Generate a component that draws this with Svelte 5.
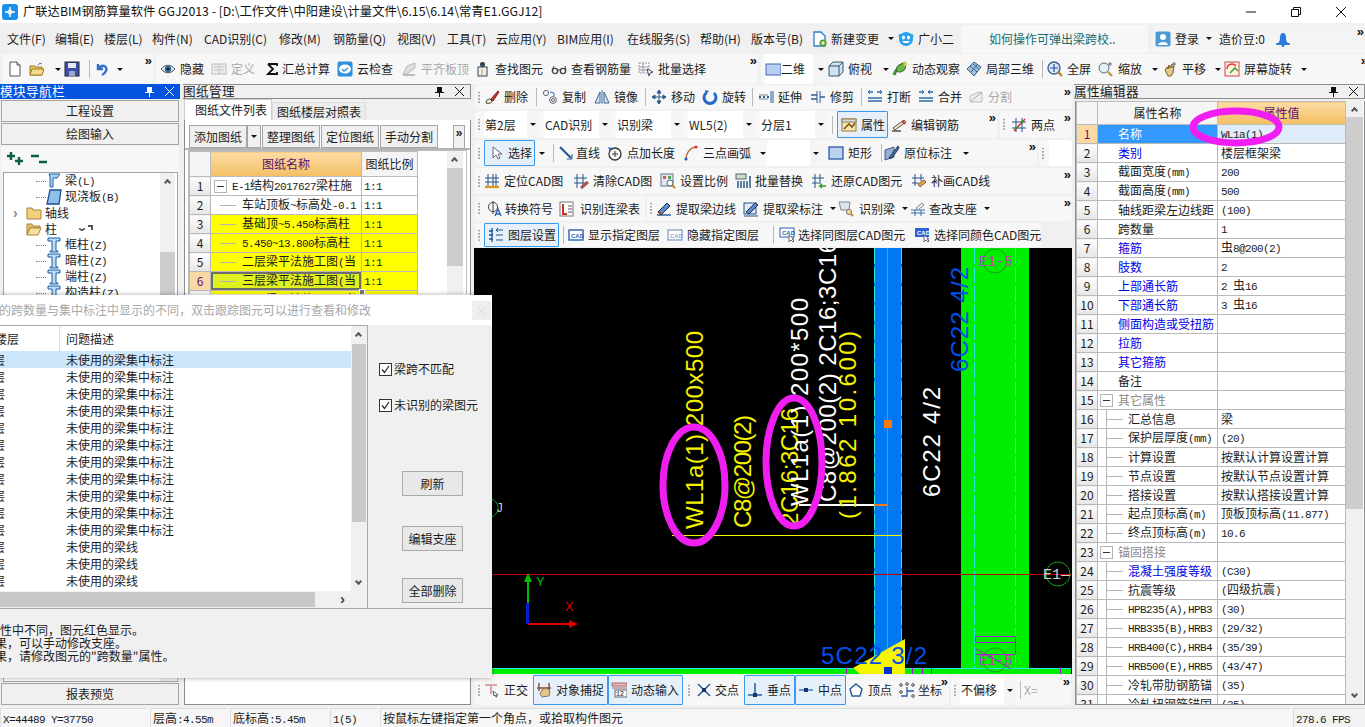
<script>
  // little 16x16 toolbar glyphs, drawn by hand
  const icons = {
    new: '<path d="M3 1h7l3 3v11H3z" fill="#fff" stroke="#555"/><path d="M10 1v3h3" fill="#ddd" stroke="#555"/>',
    open: '<path d="M1 5h5l1 1h6v8H1z" fill="#e9c46a" stroke="#a07a20"/><path d="M3 8h12l-2 6H1z" fill="#f6dc8a" stroke="#a07a20"/><path d="M9 4c1-2 3-2 4-1" stroke="#3a7bd5" fill="none"/>',
    save: '<rect x="1" y="1" width="14" height="14" fill="#3f51a5" stroke="#223"/><rect x="4" y="2" width="8" height="5" fill="#dfe6f5"/><rect x="5" y="10" width="6" height="5" fill="#9aa7c9"/>',
    undo: '<path d="M4 3v5h5M5 7c3-4 9-2 7 3-1 2-2 3-4 4" fill="none" stroke="#2f6fc9" stroke-width="2.4"/>',
    eye: '<path d="M1 8c4-5 10-5 14 0-4 5-10 5-14 0z" fill="#dfe8ee" stroke="#456"/><circle cx="8" cy="8" r="3.2" fill="#2c6a94"/><circle cx="8" cy="8" r="1.3" fill="#111"/>',
    def: '<rect x="1" y="3" width="14" height="10" fill="#eee" stroke="#bbb"/><path d="M3 6h4M3 9h4M9 6h4M9 9h4M8 3v10" stroke="#bbb"/>',
    sigma: '<path d="M3 3h9v2M3 3l5 5-5 5h9v-2" fill="none" stroke="#111" stroke-width="1.8"/>',
    cloud: '<rect x="0.5" y="0.5" width="15" height="15" rx="2" fill="#2e8fdc"/><ellipse cx="8" cy="8" rx="6" ry="4.5" fill="#fff"/><path d="M5 8l2 2 4-3" stroke="#2e8fdc" fill="none" stroke-width="1.4"/>',
    align: '<path d="M2 13l4-8 8-3v5l-8 6z" fill="#ddd" stroke="#bbb"/><path d="M2 14h12" stroke="#bbb" stroke-width="2"/>',
    find: '<rect x="5" y="1" width="5" height="5" rx="2" fill="#345"/><rect x="3" y="6" width="9" height="9" fill="#eee" stroke="#345"/><path d="M7 8v6" stroke="#c9a13b"/>',
    glasses: '<circle cx="4" cy="10" r="2.6" fill="none" stroke="#444" stroke-width="1.4"/><circle cx="12" cy="10" r="2.6" fill="none" stroke="#444" stroke-width="1.4"/><path d="M6 9h4M1 9l2-4M15 9l-1-4" stroke="#444"/>',
    batch: '<path d="M1 2h10v10H1z" fill="none" stroke="#99a" stroke-dasharray="2 1"/><path d="M1 6h10M1 9h10M5 2v10" stroke="#99a"/><path d="M9 8l6 3-3 1-1 3z" fill="#fff" stroke="#456"/>',
    rect2d: '<rect x="1" y="3" width="15" height="11" fill="#b9cff2" stroke="#4069b8"/>',
    cube: '<path d="M1 5l4-4h10v10l-4 4H1z" fill="#cfe3f0" stroke="#33576e"/><path d="M1 5h10v10M11 5l4-4" fill="none" stroke="#33576e"/>',
    orbit: '<path d="M2 14c2-6 7-11 12-12" stroke="#3a8f3a" stroke-width="3" fill="none"/><ellipse cx="9" cy="7" rx="5" ry="3.5" fill="#6fb34a" stroke="#2d6a2d" transform="rotate(-35 9 7)"/><circle cx="13" cy="3" r="2" fill="#e6c63a"/>',
    local3d: '<path d="M1 8l7-7 7 5-7 9z" fill="#9fc0df" stroke="#3c6287"/><path d="M4 5l7 6M7 3l6 5M5 11l6-7" stroke="#3c6287"/>',
    full: '<circle cx="7" cy="7" r="6" fill="#dde8f5" stroke="#3d5f97" stroke-width="1.4"/><path d="M7 3v8M3 7h8" stroke="#2152a8" stroke-width="1.2"/><path d="M11 11l4 4" stroke="#b9862c" stroke-width="2.4"/>',
    zoom: '<circle cx="6" cy="7" r="5" fill="#e4eef8" stroke="#667"/><path d="M10 11l4 4" stroke="#c39a3d" stroke-width="2.4"/><path d="M12 1v4M10 3h4" stroke="#667"/>',
    hand: '<path d="M3 9l2-3 1 2 1-4 1 3 2-4v4l2-2-1 7-2 3H6z" fill="#e3c98c" stroke="#7a5a20"/><path d="M12 1v4M10 3h4" stroke="#666"/>',
    screen: '<rect x="1" y="1" width="14" height="14" fill="#fdf6d8" stroke="#c46"/><path d="M3 8a5 5 0 0 1 9-3" fill="none" stroke="#e33" stroke-width="1.4"/><path d="M6 12l5-5 3 3" stroke="#4a9e4a" fill="none" stroke-width="1.6"/>',
    del: '<path d="M2 14c0-3 2-4 4-4l2 2c0 2-3 3-6 2z" fill="#f3e9c9" stroke="#444"/><path d="M7 10l7-8 1 1-6 9z" fill="#c33" stroke="#722"/>',
    copy: '<circle cx="4" cy="4" r="2.6" fill="none" stroke="#667"/><circle cx="11" cy="11" r="3.4" fill="none" stroke="#667"/><circle cx="11" cy="11" r="1.5" fill="none" stroke="#667"/><path d="M8 3l4 1 0 3" fill="none" stroke="#2f6fc9"/>',
    mirror: '<path d="M1 14L6 3v11zM15 14L10 3v11z" fill="#d5e4f3" stroke="#3f6791"/><path d="M8 1v14" stroke="#3f6791"/>',
    move: '<path d="M8 1v14M1 8h14M8 1L6 4h4zM8 15l-2-3h4zM1 8l3-2v4zM15 8l-3-2v4z" stroke="#2c5a8e" fill="#2c5a8e"/>',
    rot: '<path d="M12 4a6 6 0 1 1-8 0" fill="none" stroke="#2768c4" stroke-width="3"/><path d="M3 1l4 1-3 4z" fill="#2768c4"/>',
    extend: '<path d="M1 8h2M5 8h2M9 8h2" stroke="#2d5d97" stroke-width="2"/><path d="M1 6h9M1 10h9" stroke="#789" /><path d="M13 2v12M15 2v12" stroke="#2d5d97"/>',
    trim: '<path d="M1 6h6M1 10h6M10 8h5" stroke="#2d5d97" stroke-width="1.4"/><path d="M7 2v12M10 2v12" stroke="#2d5d97"/>',
    brk: '<path d="M1 3h5M10 3h5M1 12h14M1 9h14" stroke="#2d6ea8" stroke-width="1.3"/><path d="M3 1l-2 2 2 2M13 1l2 2-2 2" stroke="#2d6ea8" fill="none"/>',
    mrg: '<path d="M1 3h5M10 3h5M1 12h14M1 9h14" stroke="#2d6ea8" stroke-width="1.3"/><path d="M4 1l2 2-2 2M12 1l-2 2 2 2" stroke="#2d6ea8" fill="none"/>',
    split: '<path d="M2 13V7l9-4 3 1v9z" fill="#eee" stroke="#bbb"/><path d="M3 12L14 3" stroke="#aaa"/>',
    prop: '<rect x="1" y="2" width="14" height="12" fill="#f7e4b0" stroke="#9a7b33"/><path d="M3 12l5-5 3 3 3-4" stroke="#7a5a20" fill="none" stroke-width="1.6"/><rect x="1" y="2" width="14" height="3" fill="#cfdff2" stroke="#9a7b33"/>',
    edit: '<path d="M1 14h9" stroke="#444" stroke-width="1.4"/><path d="M2 11l11-8 2 2-11 8z" fill="#f0e3b7" stroke="#555"/><path d="M11 4l3 3" stroke="#c33" stroke-width="2"/>',
    twopt: '<path d="M5 1v14M11 1v14M1 5h14M1 11h14" stroke="#25508c"/><path d="M3 14L14 2" stroke="#d22" stroke-width="1.4"/><circle cx="5" cy="11" r="1.4" fill="#2a9e2a"/><circle cx="11" cy="5" r="1.4" fill="#2a9e2a"/>',
    cursor: '<path d="M5 2v11l3-3 2 4 2-1-2-4h4z" fill="#fff" stroke="#667"/>',
    line: '<path d="M2 2l11 11" stroke="#22558e" stroke-width="2"/><path d="M14 9v5H9" fill="none" stroke="#22558e"/>',
    ptlen: '<circle cx="8" cy="9" r="6" fill="none" stroke="#333" stroke-width="1.3"/><path d="M8 6v6M5 9h6" stroke="#333"/><path d="M1 2l4 1-2 3z" fill="#2768c4"/>',
    arc: '<path d="M3 14C3 8 7 3 12 2" fill="none" stroke="#b26b2f" stroke-width="1.4"/><circle cx="3" cy="14" r="1.6" fill="#2a62b9"/><circle cx="13" cy="2" r="1.6" fill="#d33"/>',
    rectdraw: '<rect x="1" y="2" width="14" height="12" fill="#bcd2f3" stroke="#3563ae" stroke-width="1.4"/>',
    orig: '<path d="M1 15V5l9-3v10z" fill="#93aed3" stroke="#405f8c"/><path d="M5 13L14 1l1 2-7 10z" fill="#3e6fb6" stroke="#234"/>',
    locate: '<path d="M4 1v12M9 1v12M12 1v12M1 5h14M1 9h14" stroke="#24528a"/><path d="M1 14h14" stroke="#d89a20" stroke-width="2.4"/>',
    clear: '<path d="M4 1v14M10 1v14M1 5h13M1 10h13" stroke="#24528a"/><path d="M8 15l7-6" stroke="#a55" stroke-width="3"/>',
    scale: '<rect x="1" y="1" width="12" height="12" fill="#dfe9f6" stroke="#678"/><rect x="3" y="3" width="3" height="3" fill="#d55"/><rect x="8" y="3" width="3" height="3" fill="#5a5"/><circle cx="10" cy="10" r="3" fill="#fff" stroke="#567"/><path d="M12 12l3 3" stroke="#b9862c" stroke-width="2"/>',
    replace: '<rect x="1" y="1" width="10" height="5" fill="#cfe0c7" stroke="#567"/><path d="M3 8v7M6 8v7M9 8v7M12 8v7M15 3v12" stroke="#35628f" stroke-width="1.6"/>',
    restore: '<path d="M4 1v14M9 1v10M1 5h12M1 10h7" stroke="#24528a"/><path d="M15 13H9l2-2m-2 2l2 2" stroke="#2a9e2a" stroke-width="1.6" fill="none"/>',
    drawcad: '<path d="M4 1v12M10 1v7M1 5h12M1 10h6" stroke="#24528a"/><path d="M7 11l6-4 2 2-6 5z" fill="#e0a93b" stroke="#855"/>',
    sym: '<circle cx="6" cy="6" r="4.6" fill="none" stroke="#444"/><path d="M6 0v13" stroke="#444"/><path d="M8 15l3-7 3 7M9 13h4" stroke="#2e5fb3" fill="none" stroke-width="1.4"/>',
    ltable: '<rect x="2" y="1" width="13" height="14" fill="#fff" stroke="#777"/><path d="M5 3v10h4" stroke="#c32" stroke-width="2" fill="none"/><path d="M10 5h4M10 8h4M10 11h4" stroke="#556"/>',
    edgeline: '<path d="M1 14h14" stroke="#23528f" stroke-width="1.4"/><path d="M2 11l9-9 3 3-9 9z" fill="#5b8ed0" stroke="#234"/><path d="M3 13l2-2" stroke="#d33" stroke-width="2"/>',
    beamtag: '<rect x="1" y="2" width="12" height="11" fill="#dfe9f6" stroke="#24528a"/><path d="M3 11l9-9 3 2-9 9z" fill="#5b8ed0" stroke="#234"/><path d="M1 15h14" stroke="#24528a"/>',
    recog: '<path d="M1 1h11l-1 8H3z" fill="#dfe3ea" stroke="#789"/><circle cx="11" cy="11" r="2.6" fill="#f3dd9a" stroke="#876"/><path d="M13 13l2 2" stroke="#b9862c" stroke-width="2"/>',
    support: '<path d="M1 9h14M1 12h14M5 9v6M11 9v6" stroke="#3a6fb0"/><path d="M6 7l6-5 2 2-6 5z" fill="#eee" stroke="#888"/>',
    layer: '<path d="M4 1v14M1 4h4M1 8h4M1 12h4" stroke="#24528a" stroke-width="1.3"/><path d="M15 3H8l2-2m-2 2l2 2M15 8H8M15 13H8" stroke="#24528a" fill="none"/>',
    cadshow: '<rect x="1" y="3" width="14" height="10" fill="#fff" stroke="#2b62b3" stroke-width="1.4"/><text x="3" y="11" font-size="6" font-weight="700" fill="#2b62b3" font-family="Liberation Sans">CAD</text>',
    cadhide: '<rect x="1" y="3" width="14" height="10" fill="#fff" stroke="#8ba6cc" stroke-width="1.4"/><text x="3" y="11" font-size="6" font-weight="700" fill="#8ba6cc" font-family="Liberation Sans">CAD</text>',
    cadsel: '<rect x="1" y="1" width="14" height="9" fill="#fff" stroke="#2b62b3"/><text x="3" y="8" font-size="6" font-weight="700" fill="#2b62b3" font-family="Liberation Sans">CAD</text><path d="M10 8v7l2-2 2 2 1-1-2-2h2z" fill="#fff" stroke="#667"/>',
    cadcolor: '<rect x="1" y="1" width="14" height="9" fill="#2b62d8"/><text x="3" y="8" font-size="6" font-weight="700" fill="#fff" font-family="Liberation Sans">CAD</text><path d="M10 8v7l2-2 2 2 1-1-2-2h2z" fill="#fff" stroke="#667"/>',
    ortho: '<path d="M1 2h12v2H8v8H6V4H1z" fill="#d9a5a5"/><path d="M9 9l5 4-2 0 1 2-1 0-1-2-1 1z" fill="#fff" stroke="#567"/>',
    snap: '<path d="M3 1v8M13 1v8M1 6h14" stroke="#8a4b33" stroke-width="1.4"/><path d="M4 12l2-4 4-2 4 3-1 5-7 1z" fill="#e7c880" stroke="#876"/>',
    dyn: '<rect x="1" y="1" width="15" height="3" fill="#e7b9b9" stroke="#a66"/><rect x="4" y="8" width="12" height="7" fill="#fff" stroke="#567"/><path d="M1 6h15" stroke="#a66"/><text x="5" y="14" font-size="6.5" font-family="Liberation Mono" fill="#111">12</text>',
    cross: '<path d="M2 2l12 12M14 2L2 14" stroke="#2a5f9e" stroke-width="1.6"/><rect x="6" y="6" width="4" height="4" fill="#17376b"/>',
    perp: '<path d="M1 13h14M8 1v12" stroke="#2a5f9e" stroke-width="1.5"/><rect x="6" y="11" width="4" height="4" fill="#17376b"/>',
    mid: '<path d="M1 8h14" stroke="#6f9ad0" stroke-width="2"/><rect x="6" y="6" width="4" height="4" fill="#17376b"/>',
    vertex: '<path d="M8 2l6 5-2 7H4L2 7z" fill="#fff" stroke="#2a5f9e" stroke-width="1.5"/>',
    coord: '<path d="M2 14h6V5M8 9h7" stroke="#2a5f9e" stroke-width="1.3" fill="none"/><circle cx="2" cy="3" r="1.3" fill="#fff" stroke="#444"/><circle cx="8" cy="2" r="1.3" fill="#fff" stroke="#444"/><circle cx="14" cy="3" r="1.3" fill="#fff" stroke="#444"/><circle cx="2" cy="10" r="1.3" fill="#fff" stroke="#444"/><circle cx="14" cy="14" r="1.3" fill="#fff" stroke="#444"/>',
    doc: '<path d="M2 1h7l4 4v10H2z" fill="#fff" stroke="#2f7bd5" stroke-width="1.3"/><circle cx="11" cy="12" r="3.6" fill="#5aa02c"/><path d="M11 10v4M9 12h4" stroke="#fff"/>',
    bot: '<circle cx="2.500" cy="5" r="2" fill="#27a0ee"/><circle cx="13.500" cy="5" r="2" fill="#27a0ee"/><ellipse cx="8" cy="8" rx="7" ry="7" fill="#27a0ee"/><ellipse cx="5.500" cy="6.500" rx="1.500" ry="2" fill="#fff"/><ellipse cx="10.500" cy="6.500" rx="1.500" ry="2" fill="#fff"/><path d="M4 10c2 3 6 3 8 0z" fill="#fff"/>',
    login: '<rect x="0.500" y="0.500" width="15" height="15" rx="2" fill="#4a9bd3"/><circle cx="8" cy="6" r="3" fill="#fff"/><path d="M3 14c0-4 10-4 10 0z" fill="#fff"/>',
    bell: '<path d="M3 12c1-1 2-2 2-6 0-2 1-4 3-4s3 2 3 4c0 4 1 5 2 6z" fill="#2e7bdb"/><rect x="1" y="12" width="14" height="2" rx="1" fill="#2e7bdb"/><circle cx="8" cy="15" r="1.300" fill="#2e7bdb"/>',
    app: '<rect x="0" y="0" width="16" height="16" rx="3" fill="#1e8fe6"/><path d="M8 3v10M3 8h10" stroke="#fff" stroke-width="1.400"/><circle cx="8" cy="8" r="2.200" fill="none" stroke="#fff"/>'
  };

  const menu = [
    ['文件(F)', 48], ['编辑(E)', 49], ['楼层(L)', 48], ['构件(N)', 52], ['CAD识别(C)', 75], ['修改(M)', 54],
    ['钢筋量(Q)', 64], ['视图(V)', 50], ['工具(T)', 49], ['云应用(Y)', 61], ['BIM应用(I)', 70], ['在线服务(S)', 73],
    ['帮助(H)', 51], ['版本号(B)', 61]
  ];

  const top = [
    { w: 151, pl: 5, items: [
      { i: 'new', w: 22 }, { i: 'open', w: 23 }, { caret: 1, w: 12 }, { i: 'save', w: 20 }, { sep: 1, w: 10 },
      { i: 'undo', w: 20 }, { caret: 1, w: 12 } ] },
    { w: 602, pl: 4, grip: 0, items: [
      { i: 'eye', t: '隐藏', w: 51 }, { i: 'def', t: '定义', w: 54, gray: 1 }, { i: 'sigma', t: '汇总计算', w: 72, gap: 1 },
      { i: 'cloud', t: '云检查', w: 64 }, { i: 'align', t: '平齐板顶', w: 74, gray: 1 }, { i: 'find', t: '查找图元', w: 76 },
      { i: 'glasses', t: '查看钢筋量', w: 87 }, { i: 'batch', t: '批量选择', w: 80 } ] },
    { w: 608, pl: 4, items: [
      { i: 'rect2d', t: '二维', w: 48, gap: -1 }, { caret: 1, w: 15, boxed: 1 }, { i: 'cube', t: '俯视', w: 51 }, { caret: 1, w: 13 },
      { i: 'orbit', t: '动态观察', w: 74 }, { i: 'local3d', t: '局部三维', w: 72 }, { sep: 1, w: 9 }, { i: 'full', t: '全屏', w: 51 },
      { i: 'zoom', t: '缩放', w: 50 }, { caret: 1, w: 14 }, { i: 'hand', t: '平移', w: 50 }, { caret: 1, w: 12 }, { i: 'screen', t: '屏幕旋转', w: 75 }, { caret: 1, w: 10 } ] }
  ];

  const center = [
    { h: 26, groups: [{ w: 597, grip: 1, items: [
      { i: 'del', t: '删除', w: 47 }, { sep: 1, w: 11 }, { i: 'copy', t: '复制', w: 52 }, { i: 'mirror', t: '镜像', w: 46 }, { sep: 1, w: 11 },
      { i: 'move', t: '移动', w: 51 }, { i: 'rot', t: '旋转', w: 45 }, { sep: 1, w: 11 }, { i: 'extend', t: '延伸', w: 52 }, { i: 'trim', t: '修剪', w: 46 }, { sep: 1, w: 11 },
      { i: 'brk', t: '打断', w: 51 }, { i: 'mrg', t: '合并', w: 50 }, { i: 'split', t: '分割', w: 60, gray: 1 } ] }] },
    { h: 29, groups: [
      { w: 522, grip: 1, items: [
        { combo: '第2层', w: 55 }, { blank: 1, w: 5 }, { combo: 'CAD识别', w: 67 }, { blank: 1, w: 5 }, { combo: '识别梁', w: 67 }, { blank: 1, w: 5 },
        { combo: 'WL5(2)', w: 67 }, { blank: 1, w: 5 }, { combo: '分层1', w: 67 }, { sep: 1, w: 10 },
        { i: 'prop', t: '属性', w: 51, on: 1, pad: 4 }, { blank: 1, w: 3 }, { i: 'edit', t: '编辑钢筋', w: 90 } ] },
      { w: 72, grip: 1, ml: 3, items: [{ blank: 1, w: 2 }, { i: 'twopt', t: '两点', w: 48 }] }] },
    { h: 28, groups: [
      { w: 562, grip: 1, items: [
        { i: 'cursor', t: '选择', w: 51, on: 1, pad: 4 }, { caret: 1, w: 13 }, { sep: 1, w: 10 }, { i: 'line', t: '直线', w: 49, gap: 2 },
        { i: 'ptlen', t: '点加长度', w: 76 }, { i: 'arc', t: '三点画弧', w: 76 }, { caret: 1, w: 8 }, { combo: '', w: 55 }, { blank: 1, w: 6 },
        { i: 'rectdraw', t: '矩形', w: 51 }, { sep: 1, w: 5 }, { i: 'orig', t: '原位标注', w: 77 }, { caret: 1, w: 10 } ] },
      { w: 33, grip: 1, ml: 2, white: 1, items: [] }] },
    { h: 28, groups: [{ w: 597, grip: 1, items: [
      { i: 'locate', t: '定位CAD图', w: 89 }, { i: 'clear', t: '清除CAD图', w: 87 }, { i: 'scale', t: '设置比例', w: 75 }, { i: 'replace', t: '批量替换', w: 76 },
      { i: 'restore', t: '还原CAD图元', w: 100 }, { i: 'drawcad', t: '补画CAD线', w: 90 } ] }] },
    { h: 27, groups: [
      { w: 170, grip: 1, nomore: 1, items: [{ blank: 1, w: 3 }, { i: 'sym', t: '转换符号', w: 71, gap: 2 }, { i: 'ltable', t: '识别连梁表', w: 87, gap: 6 }] },
      { w: 425, grip: 1, ml: 2, items: [
        { i: 'edgeline', t: '提取梁边线', w: 87 }, { i: 'beamtag', t: '提取梁标注', w: 85 }, { caret: 1, w: 10 }, { i: 'recog', t: '识别梁', w: 61, gap: 5 }, { caret: 1, w: 11 },
        { i: 'support', t: '查改支座', w: 72, gap: 3 }, { caret: 1, w: 10 } ] }] },
    { h: 26, groups: [{ w: 566, grip: 1, nomore: 1, items: [
      { i: 'layer', t: '图层设置', w: 75, on: 1, pad: 4 }, { sep: 1, w: 9 }, { i: 'cadshow', t: '显示指定图层', w: 99 }, { i: 'cadhide', t: '隐藏指定图层', w: 100, gap: 4 }, { sep: 1, w: 12 },
      { i: 'cadsel', t: '选择同图层CAD图元', w: 135, gap: 3 }, { i: 'cadcolor', t: '选择同颜色CAD图元', w: 134 } ] }] }
  ];

  const bottom = [
    { w: 474, grip: 1, items: [
      { i: 'ortho', t: '正交', w: 49 }, { i: 'snap', t: '对象捕捉', w: 75, on: 1, pad: 3 }, { i: 'dyn', t: '动态输入', w: 75, on: 1, pad: 3 }, { grip: 1, w: 13 },
      { i: 'cross', t: '交点', w: 48, gap: 3 }, { i: 'perp', t: '垂点', w: 51, on: 1, pad: 3 }, { i: 'mid', t: '中点', w: 51, on: 1, pad: 3 }, { blank: 1, w: 2 },
      { i: 'vertex', t: '顶点', w: 51 }, { i: 'coord', t: '坐标', w: 48, gap: 3 } ] },
    { w: 120, grip: 1, ml: 2, items: [{ combo: '不偏移', w: 56 }, { sep: 1, w: 8 }, { text: 'X=', w: 30 }] }
  ];

  const drawings = [
    ['1', 'E-1结构2017627梁柱施', 'root'], ['2', '车站顶板~标高处-0.1', ''], ['3', '基础顶~5.450标高柱', 'y'],
    ['4', '5.450~13.800标高柱', 'y'], ['5', '二层梁平法施工图(当', 'y'], ['6', '三层梁平法施工图(当', 'y sel'], ['7', '四层梁平法施工图(当', 'y']
  ];

  const tree = [
    { k: 'beam', t: '梁(L)', d: 2 }, { k: 'slab', t: '现浇板(B)', d: 2 }, { k: 'closed', t: '轴线', d: 1 }, { k: 'opened', t: '柱', d: 1 },
    { k: 'col', t: '框柱(Z)', d: 2 }, { k: 'col', t: '暗柱(Z)', d: 2 }, { k: 'col', t: '端柱(Z)', d: 2 }, { k: 'col', t: '构造柱(Z)', d: 2 }
  ];

  const problems = Array.from({ length: 14 }, (_, n) => (n < 11 ? '未使用的梁集中标注' : '未使用的梁线'));

  // b = blue link, g = group header, s = nested under a group
  const props = [
    ['名称', 'WL1a(1)', 'b sel'], ['类别', '楼层框架梁', 'b'], ['截面宽度(mm)', '200', ''], ['截面高度(mm)', '500', ''],
    ['轴线距梁左边线距', '(100)', ''], ['跨数量', '1', ''], ['箍筋', '虫8@200(2)', 'b'], ['肢数', '2', 'b'],
    ['上部通长筋', '2 虫16', 'b'], ['下部通长筋', '3 虫16', 'b'], ['侧面构造或受扭筋', '', 'b'], ['拉筋', '', 'b'],
    ['其它箍筋', '', 'b'], ['备注', '', ''], ['其它属性', '', 'g'], ['汇总信息', '梁', 's'], ['保护层厚度(mm)', '(20)', 's'],
    ['计算设置', '按默认计算设置计算', 's'], ['节点设置', '按默认节点设置计算', 's'], ['搭接设置', '按默认搭接设置计算', 's'],
    ['起点顶标高(m)', '顶板顶标高(11.877)', 's'], ['终点顶标高(m)', '10.6', 's'], ['锚固搭接', '', 'g'], ['混凝土强度等级', '(C30)', 's b'],
    ['抗震等级', '(四级抗震)', 's'], ['HPB235(A),HPB3', '(30)', 's'], ['HRB335(B),HRB3', '(29/32)', 's'], ['HRB400(C),HRB4', '(35/39)', 's'],
    ['HRB500(E),HRB5', '(43/47)', 's'], ['冷轧带肋钢筋锚', '(35)', 's'], ['冷轧扭钢筋锚固', '(35)', 's']
  ];

  // ascii runs get a half-width mono face, like the old bitmap font
  function runs(text) {
    return text.match(/[\x00-\x7f]+|[^\x00-\x7f]+/g) || [];
  }
  const isLat = (r) => r.charCodeAt(0) < 128;
</script>

{#snippet ico(name, size = 16)}
  <svg class="ico" width={size} height={size} viewBox="0 0 16 16">{@html icons[name]}</svg>
{/snippet}

{#snippet sim(text)}
  {#each runs(text) as r}<span class:lat={isLat(r)}>{r}</span>{/each}
{/snippet}

{#snippet more()}
  <span class="more">»</span>
{/snippet}

{#snippet group(g)}
  <div class="group" class:white={g.white} style:width="{g.w}px" style:margin-left="{g.ml || 0}px" style:padding-left="{g.pl || 0}px">
    {#if g.grip}<span class="grip"></span>{/if}
    {#each g.items as it}
      {#if it.sep}
        <span class="sep" style:width="{it.w}px"></span>
      {:else if it.blank}
        <span style:width="{it.w}px"></span>
      {:else if it.grip}
        <span class="gripbox" style:width="{it.w}px"><span class="grip"></span></span>
      {:else if it.combo !== undefined}
        <span class="combo" style:width="{it.w}px"><span class="ctext">{it.combo}</span><span class="cbtn"><i class="tri"></i></span></span>
      {:else if it.text}
        <span class="tool gray" style:width="{it.w}px">{it.text}</span>
      {:else if it.caret}
        <span class="caret" class:boxed={it.boxed} style:width="{it.w}px"><i class="tri"></i></span>
      {:else}
        <span class="tool" class:on={it.on} class:gray={it.gray} class:twod={it.i === 'rect2d'} style:width="{it.w}px" style:padding-left="{it.pad ?? 0}px" style:gap="{it.gap ?? 4}px">
          {@render ico(it.i)}
          {#if it.t}<span>{it.t}</span>{/if}
        </span>
      {/if}
    {/each}
    {#if !g.nomore && !g.white}{@render more()}{/if}
  </div>
{/snippet}

<div class="app">
  <header class="title">
    {@render ico('app', 16)}
    <span class="title-text">广联达BIM钢筋算量软件 GGJ2013 - [D:\工作文件\中阳建设\计量文件\6.15\6.14\常青E1.GGJ12]</span>
    <div class="winbtns">
      <svg width="10" height="10" viewBox="0 0 10 10"><path d="M0 5h10" stroke="#111" /></svg>
      <svg width="10" height="10" viewBox="0 0 10 10"><path d="M2.500 2.500V.500h7v7h-2M.500 2.500h7v7h-7z" stroke="#111" fill="none" /></svg>
      <svg width="10" height="10" viewBox="0 0 10 10"><path d="M0 0l10 10M10 0L0 10" stroke="#111" /></svg>
    </div>
  </header>

  <nav class="menubar">
    {#each menu as [label, w]}
      <span class="menu-item" style:width="{w}px">{label}</span>
    {/each}
    <span class="menu-icon">{@render ico('doc')}<span>新建变更</span><i class="tri"></i></span>
    <span class="menu-icon bot">{@render ico('bot')}<span>广小二</span></span>
    <span class="hint">如何操作可弹出梁跨校..</span>
    <div class="account">
      {@render ico('login')}
      <span>登录</span><i class="tri"></i>
      <span class="beans">造价豆:0</span>
      {@render ico('bell')}
      {@render more()}
    </div>
  </nav>

  <div class="topbar">
    {#each top as g, n}
      {@render group({ ...g, ml: n ? 3 : 2 })}
    {/each}
  </div>

  <main class="body">
    <section class="nav">
      <div class="phead active"><span>模块导航栏</span>
        <span class="pin"><svg width="9" height="11" viewBox="0 0 9 11"><path d="M2 1h5v5h2v1H5v4H4V7H0V6h2z" fill="#fff" /></svg><svg width="9" height="9" viewBox="0 0 9 9"><path d="M0 0l9 9M9 0L0 9" stroke="#fff" /></svg></span>
      </div>
      <button class="navbtn">工程设置</button>
      <button class="navbtn">绘图输入</button>
      <div class="treebar">
        <svg width="18" height="16" viewBox="0 0 18 16"><path d="M1 5h8M5 1v8M9 10h8M13 6v8" stroke="#0b5f48" stroke-width="2.400" /></svg>
        <svg width="18" height="16" viewBox="0 0 18 16"><path d="M1 5h8M9 11h8" stroke="#0b5f48" stroke-width="2.400" /></svg>
      </div>
      <div class="tree">
        {#each tree as node}
          <div class="tnode" class:deep={node.d === 2}>
            {#if node.k === 'closed'}<span class="chev">›</span>{/if}
            {#if node.k === 'opened'}<span class="chev down">›</span>{/if}
            {#if node.d === 2}<span class="dots"></span>{/if}
            <svg width="16" height="16" viewBox="0 0 16 16">
              {#if node.k === 'closed'}<path d="M1 3h5l1 2h8v9H1z" fill="#f3d07a" stroke="#a8873c" />
              {:else if node.k === 'opened'}<path d="M1 3h5l1 2h7v2H4l-3 7z" fill="#e6bc62" stroke="#a8873c" /><path d="M4 7h11l-3 7H1z" fill="#f7e09e" stroke="#a8873c" />
              {:else if node.k === 'beam'}<path d="M3 1h11l-3 4H7v9H4V4z" fill="#a8d3f0" stroke="#1e62b0" />
              {:else if node.k === 'slab'}<path d="M4 1h11l-2 14H1z" fill="#8fc0ea" stroke="#174f9c" stroke-width="1.300" />
              {:else}<path d="M2 1h12v3H10v10h2v1H4v-1h2V4H2z" fill="#bcdcf6" stroke="#1e5cab" />{/if}
            </svg>
            <span>{@render sim(node.t)}</span>
          </div>
        {/each}
        <div class="tree-scroll"><span class="up"></span><span class="thumb"></span></div>
      </div>
      <button class="navbtn report">报表预览</button>
    </section>

    <section class="drawings">
      <div class="phead"><span>图纸管理</span>
        <span class="pin"><svg width="9" height="11" viewBox="0 0 9 11"><path d="M2 1h5v5h2v1H5v4H4V7H0V6h2z" fill="#111" /></svg><svg width="9" height="9" viewBox="0 0 9 9"><path d="M0 0l9 9M9 0L0 9" stroke="#111" /></svg></span>
      </div>
      <div class="tabs"><span class="tab cur">图纸文件列表</span><span class="tab">图纸楼层对照表</span></div>
      <div class="tabbody">
        <div class="dwgbar">
          <span class="dbtn wide">添加图纸</span><span class="dbtn drop"><i class="tri"></i></span><span class="dbtn">整理图纸</span><span class="dbtn">定位图纸</span><span class="dbtn">手动分割</span>
          <span class="dmore">»</span>
        </div>
        <div class="dwgtable">
          <table>
            <colgroup><col class="c-n" /><col class="c-name" /><col class="c-r" /></colgroup>
            <thead><tr><th class="idx"></th><th class="hot">图纸名称</th><th>图纸比例</th></tr></thead>
            <tbody>
              {#each drawings as [n, name, kind]}
                <tr class:yellow={kind.includes('y')} class:sel={kind.includes('sel')}>
                  <td class="idx">{n}</td>
                  <td class="nm" class:rootrow={kind === 'root'}>
                    {#if kind === 'root'}<span class="minus"></span>{:else}<span class="branch"></span>{/if}
                    {@render sim(name)}
                  </td>
                  <td class="ratio"><span class="lat">1:1</span></td>
                </tr>
              {/each}
            </tbody>
          </table>
          <span class="handle"></span>
          <div class="vscroll"><span class="up"></span><span class="thumb"></span></div>
        </div>
        <div class="dwgfoot"></div>
      </div>
    </section>

    <section class="center">
      {#each center as row}
        <div class="cbar" style:height="{row.h}px">
          {#each row.groups as g}{@render group(g)}{/each}
        </div>
      {/each}

      <div class="canvas">
        <svg width="598" height="426" viewBox="474 249 598 426" font-family="Liberation Sans, sans-serif">
          <rect x="474" y="249" width="598" height="426" fill="#000" />
          <rect x="961" y="249" width="68" height="420" fill="#00ee00" />
          <rect x="874" y="249" width="28" height="426" fill="#0078f2" />
          <path d="M874.500 249v426M901.500 249v426M974.500 249v420M1015.500 249v420" stroke="#22e6e6" stroke-dasharray="16 3" />
          <path d="M887.500 249v426" stroke="#8a8a8a" />
          <path d="M995.500 249v420" stroke="#22d022" />
          <rect x="474" y="669" width="597" height="6" fill="#00ee00" />
          <path d="M474 669.500H853M905 669.500H1071" stroke="#22e6e6" />
          <path d="M846.500 669v6M864.500 669v6M912.500 669v6M922.500 669v6M931.500 669v6M1060.500 669v6" stroke="#9a20d0" />
          <path d="M474 575.500H1071" stroke="#c00000" />
          <path d="M672 536.500H901" stroke="#f5f500" />
          <path d="M799 506H874" stroke="#fff" stroke-width="2" />
          <path d="M874 506H887" stroke="#ff7a10" stroke-width="2" />
          <rect x="884" y="421" width="8" height="8" fill="#ff7a10" />
          <polygon points="853,669 905,640 905,675 860,675" fill="#f5f500" />
          <rect x="884" y="668" width="8" height="7" fill="#0030d0" />

          <g fill="#f2f200">
            <text transform="translate(703 530) rotate(-90)" font-size="24" textLength="198" lengthAdjust="spacing">WL1a(1) 200x500</text>
            <text transform="translate(751 529) rotate(-90)" font-size="24" textLength="113" lengthAdjust="spacing">C8@200(2)</text>
            <text transform="translate(798 527) rotate(-90)" font-size="24" textLength="118" lengthAdjust="spacing">2C16;3C16</text>
            <text transform="translate(856 520) rotate(-90)" font-size="24" textLength="188" lengthAdjust="spacing">(1.862  10.600)</text>
          </g>
          <g fill="#fff">
            <text transform="translate(808 507) rotate(-90)" font-size="24" textLength="208" lengthAdjust="spacing">WL1a(1) 200*500</text>
            <text transform="translate(836 503) rotate(-90)" font-size="24" textLength="262" lengthAdjust="spacing">C8@200(2) 2C16;3C16</text>
            <text transform="translate(940 498) rotate(-90)" font-size="24" textLength="110" lengthAdjust="spacing">6C22  4/2</text>
          </g>
          <text transform="translate(968 373) rotate(-90)" font-size="24" fill="#0050e8" textLength="105" lengthAdjust="spacing">6C22  4/2</text>
          <text x="821" y="665" font-size="24" fill="#0050e8" textLength="106" lengthAdjust="spacing">5C22  3/2</text>

          <g fill="none" stroke="#18a018">
            <circle cx="995" cy="262" r="12" />
            <circle cx="995" cy="661" r="12" />
            <circle cx="1058" cy="575" r="12" />
            <path d="M492 500c8 4 8 14 0 18" />
          </g>
          <g font-size="14" fill="#c040c0" font-family="Liberation Mono, monospace">
            <text x="979" y="267">E1-5</text>
            <text x="979" y="666">E1-5</text>
          </g>
          <text x="1043" y="580" font-size="15" fill="#d0d0d0" font-family="Liberation Mono, monospace">E1—</text>
          <text x="496" y="513" font-size="12" fill="#d0d0d0" font-family="Liberation Mono, monospace">J</text>
          <path d="M975.500 637.500h40M975.500 643.500h40M975.500 637.500v6M975.500 655.500h40M1015.500 637.500v18M975.500 649.500l35 20" stroke="#a020d0" fill="none" />

          <path d="M528 625V578" stroke="#00c000" stroke-width="2" />
          <path d="M528 574l-4 9h8z" fill="#00c000" />
          <path d="M528 625H574" stroke="#e00000" stroke-width="2" />
          <path d="M578 625l-9-4v8z" fill="#e00000" />
          <rect x="526" y="604" width="3" height="21" fill="#0020d0" />
          <text x="536" y="587" font-size="13" fill="#00c000">Y</text>
          <text x="565" y="612" font-size="13" fill="#e00000">X</text>

          <g fill="none" stroke="#f01ef0" stroke-width="7">
            <ellipse cx="694" cy="486" rx="31" ry="58" />
            <ellipse cx="794" cy="463" rx="28" ry="64" />
          </g>
        </svg>
      </div>

      <div class="cbar foot">
        {#each bottom as g}{@render group(g)}{/each}
      </div>
    </section>

    <section class="props">
      <div class="phead"><span>属性编辑器</span>
        <span class="pin"><svg width="9" height="11" viewBox="0 0 9 11"><path d="M2 1h5v5h2v1H5v4H4V7H0V6h2z" fill="#111" /></svg><svg width="9" height="9" viewBox="0 0 9 9"><path d="M0 0l9 9M9 0L0 9" stroke="#111" /></svg></span>
      </div>
      <div class="ptable">
        <table>
          <colgroup><col class="p-n" /><col class="p-name" /><col class="p-val" /></colgroup>
          <thead><tr><th class="idx"></th><th>属性名称</th><th class="hot">属性值</th></tr></thead>
          <tbody>
            {#each props as [name, val, kind], n}
              {@const k = kind.split(' ')}
              <tr class:sel={k.includes('sel')}>
                <td class="idx">{n + 1}</td>
                <td class="pn" class:link={k.includes('b')} class:grp={k.includes('g')} class:sub={k.includes('s')}>
                  {#if k.includes('g')}<span class="minus"></span>{/if}
                  {#if k.includes('s')}<span class="branch"></span>{/if}
                  {@render sim(name)}
                </td>
                <td class="pv">{@render sim(val)}</td>
              </tr>
            {/each}
          </tbody>
        </table>
        <div class="vscroll tall"><span class="up"></span><span class="thumb"></span><span class="down"></span></div>
        <svg class="circle" width="100" height="48" viewBox="0 0 100 48"><ellipse cx="50" cy="24" rx="43" ry="16" fill="none" stroke="#f01ef0" stroke-width="7" /></svg>
      </div>
    </section>

    <aside class="dialog">
      <div class="dtitle">
        <span>的跨数量与集中标注中显示的不同，双击跟踪图元可以进行查看和修改</span>
        <span class="dclose">×</span>
      </div>
      <div class="dmain">
        <div class="dlist">
          <div class="lhead"><span class="lc1">楼层</span><span class="lc2">问题描述</span></div>
          {#each problems as p, n}
            <div class="lrow" class:cur={n === 0}><span class="lc1">层</span><span class="lc2">{p}</span></div>
          {/each}
          <div class="lvs"><span class="up"></span><span class="thumb"></span><span class="down"></span></div>
          <div class="lhs"><span class="thumb"></span><span class="next">›</span></div>
        </div>
        <div class="dside">
          <label class="chk"><span class="box"><svg width="11" height="11" viewBox="0 0 11 11"><path d="M2 5.500l2.500 3L9 2" fill="none" stroke="#222" stroke-width="1.200" /></svg></span>梁跨不匹配</label>
          <label class="chk second"><span class="box"><svg width="11" height="11" viewBox="0 0 11 11"><path d="M2 5.500l2.500 3L9 2" fill="none" stroke="#222" stroke-width="1.200" /></svg></span>未识别的梁图元</label>
          <button class="sbtn first">刷新</button>
          <button class="sbtn">编辑支座</button>
          <button class="sbtn last">全部删除</button>
        </div>
      </div>
      <div class="dnotes">
        <p>属性中不同，图元红色显示。</p>
        <p>果，可以手动修改支座。</p>
        <p>果，请修改图元的"跨数量"属性。</p>
      </div>
    </aside>
  </main>

  <footer class="status">
    <span class="st s1">{@render sim('X=44489 Y=37750')}</span>
    <span class="st s2">{@render sim('层高:4.55m')}</span>
    <span class="st s3">{@render sim('底标高:5.45m')}</span>
    <span class="st s4">{@render sim('1(5)')}</span>
    <span class="st s5">按鼠标左键指定第一个角点，或拾取构件图元</span>
    <span class="st s6">{@render sim('278.6 FPS')}</span>
  </footer>
</div>

<style>
  :global(body) { margin: 0; }
  .app {
    position: relative;
    width: 1365px;
    height: 727px;
    overflow: hidden;
    display: flex;
    flex-direction: column;
    background: #f0f0f0;
    color: #1c1c1c;
    font: 12px/1 "Noto Sans CJK SC", "Liberation Sans", sans-serif;
  }
  .ico { flex: none; display: block; }
  .lat { font-family: "Liberation Mono", monospace; font-size: 11px; letter-spacing: -0.600px; }

  .title {
    height: 23px;
    background: #fff;
    display: flex;
    align-items: center;
    padding-left: 2px;
    gap: 5px;
    color: #111;
    font-size: 12.300px;
    flex: none;
  }
  .title-text { white-space: pre; }
  .winbtns { margin-left: auto; display: flex; gap: 35px; padding-right: 19px; }

  .menubar { height: 31px; display: flex; align-items: center; padding-left: 7px; white-space: nowrap; flex: none; }
  .menu-item { display: block; }
  .menu-icon { display: flex; align-items: center; gap: 3px; width: 86px; }
  .menu-icon .tri { margin-left: 6px; }
  .menu-icon.bot { width: 63px; gap: 4px; }
  .hint { width: 159px; height: 28px; padding-left: 28px; background: #f7f7f7; line-height: 28px; color: #1a6a6a; }
  .account { flex: 1; display: flex; align-items: center; margin-left: 5px; padding-left: 2px; gap: 4px; height: 28px; background: #f4f4f4; position: relative; }
  .account .beans { margin: 0 6px 0 3px; }
  .account .tri { margin-left: 3px; }

  .tri { display: inline-block; width: 0; height: 0; border: 3px solid transparent; border-top: 3px solid #111; border-bottom: 0; }

  .topbar { height: 30px; display: flex; align-items: center; flex: none; }
  .group {
    height: 100%;
    box-sizing: border-box;
    display: flex;
    align-items: center;
    background: #f7f7f7;
    border-radius: 3px;
    position: relative;
    flex: none;
    white-space: nowrap;
  }
  .group.white { background: linear-gradient(90deg, #f7f7f7 30%, #fff 30%); }
  .grip {
    flex: none;
    width: 9px;
    height: 13px;
    background: radial-gradient(circle at center, #a8a8a8 1px, transparent 1.300px) 3px 0 / 2px 3.200px repeat-y;
  }
  .gripbox { display: flex; justify-content: center; }
  .more {
    position: absolute;
    right: 1px;
    top: 0;
    font: 700 13px/1 "Liberation Sans", sans-serif;
    color: #111;
  }
  .sep { display: flex; justify-content: center; height: 18px; position: relative; flex: none; }
  .sep::after { content: ""; width: 1px; background: #b9b9b9; }
  .tool {
    display: flex;
    align-items: center;
    height: 100%;
    box-sizing: border-box;
    flex: none;
  }
  .tool.gray { color: #a9a9a9; }
  .tool.on { outline: 1px solid #3a9af0; outline-offset: -1px; background: #e6f0fa; border-radius: 1px; }
  .tool.twod { background: #fff; }
  .caret { display: flex; align-items: center; justify-content: center; height: 100%; flex: none; }
  .caret.boxed { background: #f4f4f4; }
  .combo { display: flex; align-items: center; height: 100%; background: #fff; flex: none; }
  .ctext { flex: 1; padding-left: 1px; }
  .cbtn { width: 12px; height: 100%; background: #f5f5f5; display: flex; align-items: center; justify-content: center; }

  .body { flex: none; height: 624px; position: relative; display: grid; grid-template-columns: 183px 291px 600px 1fr; grid-template-rows: 624px; }
  .phead {
    height: 15px;
    flex: none;
    box-sizing: border-box;
    border: 1px solid #8c8c8c;
    border-width: 1px 1px 1px 0;
    display: flex;
    align-items: center;
    justify-content: space-between;
    font-size: 12.600px;
    letter-spacing: 0.400px;
  }
  .phead.active { background: #0454e0; color: #fff; border: 0; }
  .pin { display: flex; gap: 11px; align-items: center; padding-right: 6px; }

  .nav { width: 180px; display: flex; flex-direction: column; min-height: 0; }
  .navbtn {
    height: 22px;
    margin: 1px 1px 0;
    background: #f0f0f0;
    border: 1px solid #a5a5a5;
    padding: 0;
    font: inherit;
    color: inherit;
    flex: none;
  }
  .treebar { height: 26px; display: flex; align-items: center; padding-left: 5px; gap: 6px; background: #f7f7f7; margin: 1px 1px 0; flex: none; }
  .tree {
    position: relative;
    flex: 1;
    margin: 0 2px 0 3px;
    border: 1px solid #a5a5a5;
    background: #fff;
    overflow: hidden;
    box-sizing: border-box;
    min-height: 0;
  }
  .tnode { height: 16px; display: flex; align-items: center; gap: 3px; position: relative; padding-left: 22px; }
  .tnode.deep { padding-left: 42px; }
  .chev { position: absolute; left: 9px; color: #888; font: 700 14px/16px "Liberation Sans", sans-serif; }
  .chev.down { transform: rotate(90deg); color: #444; }
  .dots { position: absolute; left: 32px; width: 10px; top: 8px; border-top: 1px dotted #888; }
  .tree-scroll { position: absolute; right: 2px; top: 0; bottom: 0; width: 15px; background: #f0f0f0; }
  .tree-scroll .thumb { position: absolute; top: 79px; left: 0; right: 0; height: 400px; background: #cdcdcd; }
  .up, .down { position: absolute; left: 50%; width: 5px; height: 5px; margin-left: -3px; border: solid #555; border-width: 2px 0 0 2px; transform: rotate(45deg); top: 7px; box-sizing: border-box; }
  .down { top: auto; bottom: 7px; transform: rotate(225deg); }
  .report { margin-top: 1px; margin-bottom: 3px; }

  .drawings { width: 288px; display: flex; flex-direction: column; min-height: 0; }
  .tabs { height: 21px; display: flex; align-items: flex-end; padding-left: 1px; flex: none; }
  .tab { padding: 0 4px; height: 17px; line-height: 17px; background: #ececec; border: 1px solid #ddd; border-bottom: 0; width: 84px; text-align: center; }
  .tab.cur { height: 20px; line-height: 19px; background: #fff; border-color: #ccc; width: 78px; padding: 0 1px 0 7px; }
  .tabbody { flex: 1; background: #fff; margin-left: 1px; border: 1px solid #8c8c8c; border-width: 0 1px 1px 1px; display: flex; flex-direction: column; min-height: 0; margin-bottom: 3px; }
  .dwgbar { margin-top: 5px; padding-left: 4px; display: flex; position: relative; border-bottom: 2px solid #b4b4b4; box-sizing: border-box; height: 25px; flex: none; }
  .dbtn { border: 1px solid #a5a5a5; background: #f0f0f0; width: 56px; text-align: center; line-height: 22px; margin-right: 1px; }
  .dbtn.wide { width: 56px; margin-right: 0; }
  .dbtn.drop { width: 12px; display: flex; align-items: center; justify-content: center; }
  .dmore { position: absolute; right: 5px; top: 0; width: 10px; height: 22px; border: 1px solid #a5a5a5; background: #f0f0f0; font: 700 12px/14px "Liberation Sans", sans-serif; text-align: center; }
  .dwgtable { position: relative; margin: 0 3px 0 3px; height: 143px; overflow: hidden; flex: none; border: 1px solid #bbb; border-bottom: 0; }
  table { border-collapse: collapse; table-layout: fixed; background: #fff; }
  .dwgtable table { width: 228px; }
  .handle { position: absolute; left: 170px; top: 138px; width: 4px; height: 4px; background: #777; border: 1px solid #fff; }
  .c-n { width: 21px; }
  .c-name { width: 151px; }
  .c-r { width: 56px; }
  th { height: 24px; padding: 0; font-weight: 400; font-size: 12px; border: 1px solid #bcbcbc; background: #f5f5f5; }
  th.hot { background: linear-gradient(#fcdca5, #f3bf63); color: #5b0f78; }
  td { height: 18px; padding: 0; border: 1px solid #b9b9b9; white-space: nowrap; overflow: hidden; }
  td.idx { text-align: center; background: linear-gradient(#fdfdfd, #e6e6e6); }
  td.nm { padding-left: 31px; position: relative; }
  td.nm.rootrow { padding-left: 21px; }
  .minus { position: absolute; width: 11px; height: 11px; border: 1px solid #b4b4b4; left: 3px; top: 3px; background: linear-gradient(#333, #333) center / 7px 1px no-repeat #fff; box-sizing: content-box; }
  .branch { position: absolute; left: 9px; width: 16px; top: 9px; border-top: 1px solid #b4b4b4; }
  .ratio { padding-left: 2px; }
  .yellow td.nm, .yellow td.ratio { background: #ffff00; }
  .sel td.idx { background: #fbd9a3; color: #6a0f80; }
  .yellow.sel td.nm { background: #dff01e; box-shadow: inset 0 0 0 2px #6e6e6e; }
  .vscroll { position: absolute; right: 3px; top: 0; width: 16px; bottom: 0; background: #f0f0f0; }
  .vscroll .thumb { position: absolute; left: 0; right: 0; top: 17px; height: 98px; background: #cdcdcd; }
  .dwgfoot { flex: 1; }

  .center { display: flex; flex-direction: column; width: 598px; min-height: 0; }
  .cbar { display: flex; align-items: center; flex: none; padding-left: 1px; }
  .cbar .group { height: calc(100% - 2px); }
  .canvas { height: 426px; flex: none; overflow: hidden; }
  .canvas svg { display: block; }
  .foot { height: 32px; background: #f0f0f0; }

  .props { display: flex; flex-direction: column; width: 291px; min-height: 0; }
  .ptable { position: relative; flex: 1; border: 1px solid #8c8c8c; border-top: 0; margin: 2px 0 3px 1px; overflow: hidden; background: #fff; min-height: 0; }
  .ptable table { width: 269px; }
  .ptable th { height: 22px; }
  .p-n { width: 21px; }
  .p-name { width: 120px; }
  .p-val { width: 128px; }
  .pn { padding-left: 20px; position: relative; }
  .pv { padding-left: 3px; white-space: pre; }
  .pn.link { color: #0000e6; }
  .pn.grp { color: #8a8a8a; padding-left: 20px; }
  .pn.grp .minus { left: 2px; top: 3px; }
  .pn.sub { padding-left: 30px; }
  .pn.sub .branch { left: 8px; width: 17px; }
  .pn.sub::before { content: ""; position: absolute; left: 8px; top: -1px; bottom: -1px; border-left: 1px solid #b4b4b4; }
  tr.sel .pn { background: #3399ff; color: #fff; }
  tr.sel .pv { background: #dfedfb; }
  .vscroll.tall { right: 1px; width: 17px; }
  .vscroll.tall .thumb { top: 16px; height: 392px; }
  .circle { position: absolute; left: 110px; top: 2px; }

  .dialog {
    position: absolute;
    left: 0;
    top: 211px;
    width: 492px;
    height: 383px;
    background: #f0f0f0;
    box-shadow: 0 0 5px rgba(0, 0, 0, 0.35);
    display: flex;
    flex-direction: column;
    overflow: hidden;
    z-index: 3;
  }
  .dtitle { height: 30px; background: #fff; display: flex; align-items: center; justify-content: space-between; color: #a8a8a8; white-space: nowrap; margin-left: -1px; }
  .dclose { width: 19px; height: 19px; margin-right: 1px; background: #eee; color: #ddd; text-align: center; line-height: 19px; }
  .dmain { height: 283px; display: flex; border-bottom: 1px solid #a8a8a8; flex: none; }
  .dlist { position: relative; width: 368px; background: #fff; border-top: 1px solid #a8a8a8; border-right: 1px solid #a8a8a8; flex: none; box-sizing: border-box; }
  .lhead { height: 25px; display: flex; align-items: center; }
  .lrow { height: 17px; display: flex; align-items: center; width: 351px; }
  .lrow.cur { background: #cce6fb; }
  .lc1 { width: 60px; margin-left: -7px; flex: none; }
  .lhead .lc1 { margin-left: -5px; width: 60px; }
  .lhead .lc2 { border-left: 1px solid #ddd; padding-left: 6px; height: 100%; line-height: 25px; margin-left: 4px; }
  .lrow .lc2 { margin-left: 13px; }
  .lvs { position: absolute; right: 0; top: 0; width: 16px; height: 265px; background: #f0f0f0; }
  .lvs .thumb { position: absolute; left: 1px; right: 1px; top: 18px; height: 178px; background: #c8c8c8; }
  .lhs { position: absolute; left: 0; right: 0; bottom: 0; height: 17px; background: #f0f0f0; }
  .lhs .thumb { position: absolute; left: 0; top: 1px; height: 15px; width: 315px; background: #c8c8c8; }
  .next { position: absolute; left: 340px; top: 0; font: 700 15px/15px "Liberation Sans", sans-serif; color: #444; }
  .dside { flex: 1; position: relative; display: flex; flex-direction: column; align-items: flex-start; padding-left: 11px; }
  .chk { display: flex; align-items: center; gap: 2px; margin-top: 36px; height: 16px; }
  .chk.second { margin-top: 20px; }
  .box { width: 11px; height: 11px; border: 1px solid #333; background: #fff; display: block; flex: none; }
  .box svg { display: block; }
  .sbtn { width: 61px; height: 25px; margin-left: 23px; padding: 0; font: inherit; color: inherit; border: 1px solid #aaa; background: #e8e8e8; margin-top: 30px; flex: none; }
  .sbtn.first { margin-top: 58px; }
  .sbtn.last { margin-top: 27px; }
  .dnotes { padding: 14px 0 0; margin-left: -12px; }
  .dnotes p { margin: 0; height: 13px; line-height: 13px; white-space: nowrap; }
  .dnotes p:nth-child(2), .dnotes p:nth-child(3) { margin-left: 7px; }

  .status { height: 19px; display: flex; gap: 3px; background: #f6f6f6; flex: none; }
  .st { box-sizing: border-box; border-left: 1px solid #ddd; border-top: 1px solid #ddd; padding-left: 2px; line-height: 18px; white-space: pre; }
  .s1 { width: 147px; }
  .s2 { width: 77px; }
  .s3 { width: 97px; }
  .s4 { width: 47px; }
  .s5 { width: 910px; }
  .s6 { flex: 1; background: #f2f2f2; }
</style>
